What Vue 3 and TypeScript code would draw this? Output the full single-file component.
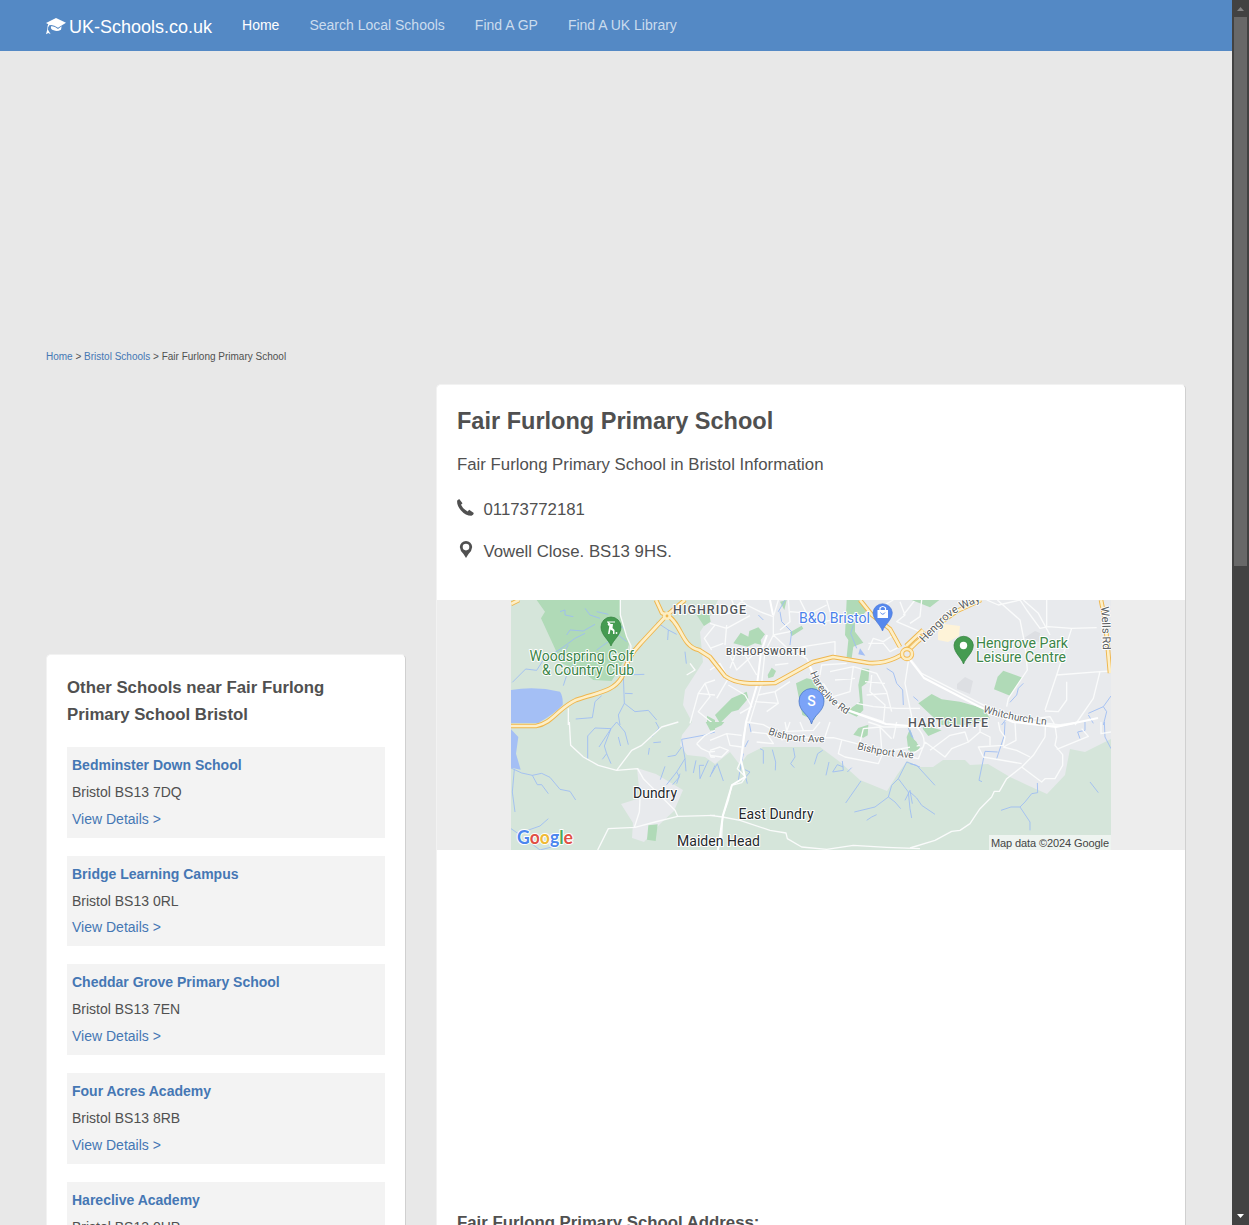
<script setup lang="ts">
interface School { name: string; area: string }
interface Tile { x: number; y: number; parks: string[]; water: string[]; streams: string; roads: string }

const links: string[] = ['Home', 'Search Local Schools', 'Find A GP', 'Find A UK Library']

const schools: School[] = [
  { name: 'Bedminster Down School', area: 'Bristol BS13 7DQ' },
  { name: 'Bridge Learning Campus', area: 'Bristol BS13 0RL' },
  { name: 'Cheddar Grove Primary School', area: 'Bristol BS13 7EN' },
  { name: 'Four Acres Academy', area: 'Bristol BS13 8RB' },
  { name: 'Hareclive Academy', area: 'Bristol BS13 0HP' },
]

// Each map tile is drawn at triple scale with its own origin.
const tiles: Tile[] = [
  {
    x: -6, y: -5,
    parks: ['M95 15 L120 50 L108 70 L145 150 L170 205 L240 235 L265 255 L320 258 L355 200 L372 148 L345 60 L345 15Z', 'M575 60 L597 93 L617 80 L612 55Z', 'M606 362 L630 375 L630 390 L606 390Z'],
    water: ['M18 285 Q90 272 165 290 Q175 305 173 330 Q150 355 100 384 L18 384Z'],
    streams: 'M22 262 L62 222 L95 226 L115 195 L172 158 L210 130 L240 115 M165 195 L190 150 M165 50 L180 45 L180 60 L205 65 M240 40 L255 60 L285 70 M185 120 L195 105 L235 108 L270 88 M275 50 L310 58 M275 165 L310 140 L340 120 L365 140 M175 272 L190 225 L230 185 M355 240 L358 325 L390 350 L430 346 L455 375 M358 240 L418 238 M212 372 L262 368 L270 320 L290 302 M345 390 L340 360 L358 325 M360 295 L383 296 M455 82 L490 105 L515 118 M488 135 L490 105 M540 170 L544 206 M340 85 L360 105',
    roads: 'M346 15 L346 60 L365 125 L378 152 L376 180 M190 340 L190 390 M630 255 L600 265 L580 295 L555 385 M580 295 L630 300 M600 265 L615 305 L580 350 L630 390 M555 205 L570 225 L545 240 M630 90 L598 130 L620 165',
  },
  {
    x: 199, y: -5,
    parks: ['M70 145 L92 113 L115 125 L118 108 L145 97 L165 118 L152 135 L155 150 L135 145 L112 155Z', 'M240 112 L275 92 L280 101 L245 124Z', 'M410 15 L458 15 L472 45 L435 85 L435 110 L460 143 L430 155 L425 190 L410 185 L415 135 L405 120Z', 'M258 265 L290 250 L325 257 L345 310 L312 375 L277 360Z', 'M455 220 L478 222 L475 260 L455 275 L460 345 L440 365 L408 350 L450 320 L445 270Z', 'M15 360 L65 310 L110 290 L115 310 L85 345 L65 350 L30 385Z', 'M173 240 L185 218 L198 228 L190 245 L175 250Z', 'M210 20 L230 15 L223 45Z'],
    water: ['M445 178 L450 160 L466 182Z'],
    streams: 'M430 90 L422 115 L440 160 M240 150 L245 110 L215 80 L210 50 M145 60 L160 75 M530 220 L550 233 L560 265 L578 285 L580 330 M205 50 L225 15',
    roads: 'M92 15 L110 30 L150 50 L190 65 L205 15 M190 65 L190 120 L232 160 L290 190 L300 210 L335 290 L400 340 L520 380 M190 120 L165 170 L155 265 L118 385 M0 85 L50 100 L120 62 M65 15 L80 50 L30 60 M100 15 L60 50 M235 15 L240 80 L210 105 M190 120 L240 110 M240 50 L300 55 L350 30 M270 15 L290 55 L320 85 L385 70 M350 15 L360 50 L405 65 M40 145 L0 160 M60 180 L80 225 L145 165 M75 180 L60 220 M105 180 L140 240 M50 90 L45 150 M0 225 L30 205 L55 250 L20 310 M55 270 L105 300 L125 335 L90 355 M145 300 L195 290 L205 325 L135 320 M205 325 L170 350 M195 290 L240 260 M205 185 L225 170 L280 155 L285 190 M280 155 L375 140 L375 180 M195 210 L235 205 M360 230 L430 215 L500 235 L530 290 L545 350 M430 215 L420 290 L370 305 M375 255 L435 250 M340 265 L370 310 M465 260 L525 265 M470 300 L530 295 M440 325 L490 335 L560 340 M485 240 L480 290 L525 330 L520 385 M330 240 L335 210 L410 205 M475 145 L520 145 L540 170 L570 155 M475 165 L490 130 L520 140 L550 120 M505 40 L550 15 M570 20 L585 60 L560 80 L630 110 M615 15 L580 60 M595 200 L585 265 L610 390 M550 340 L630 340',
  },
  {
    x: 399, y: -5,
    parks: ['M5 15 L88 15 L60 37Z', 'M280 227 L337 248 L300 302 L252 283 L263 245Z', 'M25 325 L65 297 L95 313 L150 320 L220 340 L240 370 L180 390 L95 390Z'],
    water: [],
    streams: 'M340 265 L325 280 L320 300 L300 322 M10 305 L25 318 M603 303 L580 335 L535 355 M580 335 L590 350 L580 390 M305 350 L275 390 M535 360 L550 385',
    roads: 'M0 190 L35 235 L200 320 L300 370 L450 390 M35 15 L30 65 L0 85 M230 15 L265 30 L330 15 L350 45 L390 100 L415 95 L485 100 L560 98 M340 15 L385 55 L420 120 M410 95 L410 15 M262 15 L330 75 L345 150 L352 225 L295 310 L290 335 M485 100 L440 240 L405 345 M440 240 L570 230 L603 228 M570 230 L550 310 L495 390 M470 260 L470 315 L445 350 L405 348 M255 345 L340 375 L420 365 L435 390',
  },
  {
    x: -6, y: 122,
    parks: ['M430 310 L458 307 L452 357 L426 353Z', 'M602 0 L630 0 L630 26 L615 25Z'],
    water: ['M18 22 L40 45 L33 95 L47 143 L18 137Z'],
    streams: 'M18 138 L50 153 L82 160 L110 154 L135 166 L165 202 L195 208 L212 234 M82 160 L97 188 L110 188 L130 215 M28 142 L22 210 L30 270 M18 320 L40 335 L105 312 L130 290 M80 365 L105 384 L140 375 M248 110 L248 42 L270 18 L318 20 L335 0 L360 30 L370 68 M318 20 L298 72 L305 95 L292 112 M318 20 L282 75 M305 95 L318 125 M340 45 L347 72 M440 45 L462 18 L452 0 M430 98 L433 78 M445 62 L468 60 M630 30 L595 40 L530 52 L540 110 L515 150 L485 188 M530 75 L512 100 L488 104 M515 150 L523 165 L503 188 M540 110 L543 148 M573 115 L565 153 M610 115 L585 170 L583 130 L597 130 M480 133 L466 173 M525 155 L515 185 M630 130 L615 165',
    roads: 'M193 0 L197 70 L235 105 L280 130 L335 145 L398 140 L415 170 L455 210 L510 265 L518 283 M518 283 L450 300 L390 316 L310 320 L278 384 M335 145 L380 85 L410 70 L470 15 L520 0 M405 230 L403 270 L388 316 M518 283 L630 280 M575 65 L600 40 L630 25 M575 65 L590 80 L612 90 L630 88 M612 90 L618 105 L630 105',
  },
  {
    x: 199, y: 122,
    parks: ['M0 0 L43 0 L35 10 L0 26Z', 'M430 38 L445 18 L475 8 L473 40 L460 47Z', 'M590 45 L600 20 L610 50 L630 75 L620 90 L595 85Z'],
    water: [],
    streams: 'M118 5 L123 30 M115 55 L105 75 M100 95 L90 145 L85 175 M105 143 L120 150 L107 165 L112 185 M22 125 L5 155 M22 125 L40 177 M150 80 L160 85 L160 125 M187 83 L197 120 L196 145 M250 78 L255 105 L242 125 L253 137 M338 85 L323 95 L313 127 M357 120 L348 160 M397 117 L400 145 L368 150 L382 128 L400 135 M425 137 L412 150 M453 177 L407 243 M590 120 L565 170 L545 190 L535 225 L495 255 L433 270 M535 225 L555 240 L572 260 M565 170 L595 210 L600 260 L605 288 M585 235 L600 205 L607 245 M590 120 L630 135 M470 295 L485 285 L500 278 M592 10 L605 45',
    roads: 'M110 0 L100 45 L95 110 L82 140 L107 165 L95 182 L65 190 L55 235 L38 285 L35 345 L22 384 M110 0 L160 8 L200 30 L300 48 L370 47 L440 65 L520 90 L630 70 M225 0 L230 25 L215 55 M240 0 L230 28 L310 25 L330 0 M270 0 L280 25 M360 0 L345 45 M395 55 L385 95 L405 105 L505 125 L520 90 M450 60 L460 20 L510 15 L545 50 M475 0 L520 15 L630 15 M510 15 L515 80 M560 0 L550 50 M125 30 L170 35 L190 65 L140 60 M0 55 L50 35 L95 40 M0 85 L30 75 L55 85 L35 105 L0 100 M50 35 L60 70 L95 75 M38 285 L0 280 M38 285 L90 295 L180 325 L228 333 L232 350 L275 375 L350 382 L430 370 L530 376 L630 380',
  },
  {
    x: 399, y: 122,
    parks: ['M45 0 L60 15 L95 25 L55 42 L38 20Z', 'M0 42 L20 60 L20 85 L0 90Z'],
    water: [],
    streams: 'M0 125 L20 130 L75 190 M0 210 L20 228 L35 250 L75 277 M285 0 L283 40 L260 110 M263 90 L225 88 L207 175 L216 179 M382 183 L383 212 L365 215 L345 240 L330 255 L303 255 L273 265 M330 255 L360 300 L360 325 M540 180 L565 212 M525 0 L525 25 L503 30 L510 50 M583 0 L585 45 L603 80 M0 25 L10 50',
    roads: 'M20 15 Q50 45 40 75 L0 100 M45 60 L25 110 L0 105 M45 60 L105 105 L125 80 L175 60 M60 85 L120 40 L165 30 L175 60 L210 30 M210 0 L210 30 L240 45 L240 70 M265 0 L270 25 L285 45 L280 70 L205 75 L220 105 L335 125 M315 0 L318 55 L280 75 L320 85 L360 105 M407 0 L405 45 L370 100 L335 135 L290 170 L268 208 L253 208 L245 225 L210 260 L180 305 L150 325 L125 328 L75 355 L0 378 M335 135 L395 180 L405 170 L435 170 L458 130 L458 98 L435 70 L440 45 L435 10 M435 10 L510 0 M440 82 L535 43 L515 20 M573 0 L573 35 L603 30 M350 0 L445 12 L490 5',
  },
]

const mainRoad = 'M0 126 L25 126 C42 123 47 108 65 100 C88 92 102 92 111 77 C116 62 120 53 130 43 L156 15 C171 24 170 46 188 50 L199 57 L214 76 C225 84 237 84 264 83 L302 62 L322 57 L358 63 C376 64 391 58 406 42 L424 27 L446 11 L470 0'
const branches = 'M145 0 L151 13 L156 15 L174 0 M0 4 L8 0 M349 0 L361 15 L379 29 L389 47 M590 0 L594 20 L597 50 L599 73 M395 46 L412 30'
</script>

<template>
  <div class="window">
    <main class="page">
      <nav class="navbar">
        <a class="brand">
          <svg class="cap" viewBox="0 0 60 51">
            <path d="M0 15 L30 0 L60 14 L36 29 Q20 18 10 22 Q5 27 6 35 L14 49 L7 45 L0 49 L4 34 Q3 24 7 19Z" />
            <path d="M15 25 Q25 23 36 33 L47 25 L45 35 Q34 42 23 37 Q13 35 15 25Z" />
          </svg>UK-Schools.co.uk</a>
        <a v-for="(link, i) in links" :key="link" :class="['nav-link', { active: i === 0 }]">{{ link }}</a>
      </nav>
      <div class="container">
        <div class="crumbs"><a>Home</a> &gt; <a>Bristol Schools</a> &gt; Fair Furlong Primary School</div>
        <div class="columns">
          <aside class="card sidebar">
            <h2>Other Schools near Fair Furlong Primary School Bristol</h2>
            <div v-for="school in schools" :key="school.name" class="school">
              <a class="name">{{ school.name }}</a>
              <span>{{ school.area }}</span>
              <a>View Details &gt;</a>
            </div>
          </aside>
          <section class="card details">
            <h1>Fair Furlong Primary School</h1>
            <p class="intro">Fair Furlong Primary School in Bristol Information</p>
            <p class="contact">
              <svg class="icon" viewBox="0 0 17 17"><path d="M.2 1.5 L2.2 0 L5.5 4.2 L4 5.8 Q5.8 9.8 10.6 12.5 L12.2 10.8 L16.8 14 Q16.6 16.2 14.4 16.8 Q8.5 16.8 4 11.5 Q-.5 6 .2 1.5Z" /></svg>
              <span>01173772181</span>
            </p>
            <p class="contact">
              <svg class="icon" viewBox="0 0 17 17"><path fill-rule="evenodd" d="M9 0 A6.2 6.2 0 0 1 15.2 6 Q15 9.5 11.5 13 L9 17 L6.5 13 Q3 9.5 2.8 6 A6.2 6.2 0 0 1 9 0Z M9 2.8 A3.3 3.3 0 1 0 9 9.4 A3.3 3.3 0 1 0 9 2.8Z" /></svg>
              <span>Vowell Close. BS13 9HS.</span>
            </p>
            <div class="map">
              <svg width="600" height="250" viewBox="0 0 600 250">
                <defs>
                  <path id="hareclive" d="M299 73 Q309 101 345 120" />
                  <path id="hengrove" d="M413 43 L438 18 Q450 8 484 -5" />
                  <path id="whitchurch" d="M472 112 Q502 122 545 126" />
                  <path id="bishport-w" d="M257 134 Q281 144 325 142" />
                  <path id="bishport-e" d="M346 149 Q373 157 413 159" />
                  <path id="wells" d="M590 7 Q592 30 592 65" />
                </defs>
                <rect width="600" height="250" fill="#d5e5da" />
                <path fill="#e8eaed" d="M207 0 L200 15 L189 32 L192 62 L174 90 L172 105 L181 122 L171 135 L169 145 L176 155 L194 157 L204 164 L219 152 L229 165 L236 155 L252 147 L309 147 L329 162 L349 180 L376 191 L386 175 L396 161 L409 167 L422 167 L432 160 L454 160 L459 165 L477 164 L499 177 L516 185 L536 194 L554 175 L559 149 L574 152 L600 139 V0Z" />
                <path fill="#e8eaed" d="M126 168 L145 174 L172 190 L163 211 L149 224 L133 242 L121 238 L122 223 L110 204 L129 198Z" />
                <path fill="#fef3d8" d="M427 32 L433 24 L449 26 L448 36 L437 42 L427 40Z" />
                <path fill="#dddfe3" d="M446 84 L454 77 L462 81 L459 94 L446 89Z M513 38 L524 31 L529 33 L528 42Z" />
                <g v-for="(tile, i) in tiles" :key="i" :transform="`translate(${tile.x} ${tile.y}) scale(.33333)`">
                  <path v-for="d in tile.parks" :key="d" :d="d" fill="#b0dab7" />
                  <path v-for="d in tile.water" :key="d" :d="d" fill="#a4bff5" />
                  <path class="stream" :d="tile.streams" />
                  <path class="road" :d="tile.roads" />
                </g>
                <path class="avenue" d="M259 0 L262 15 M256 35 L250 52 L246 85 L235 122 L230 160 L234 177 L221 185 L212 215 L207 250 M298 65 L310 92 L333 109 L375 124 L410 127 M399 60 L413 78 L467 106 L502 122 L545 127 L587 118" />
                <g class="main-road outer"><path :d="mainRoad" /><path :d="branches" /></g>
                <g class="main-road inner"><path :d="mainRoad" /><path :d="branches" /></g>
                <circle cx="396" cy="54" r="5" fill="#e8eaed" stroke="#f3b94e" stroke-width="4.4" />
                <circle cx="396" cy="54" r="5" fill="none" stroke="#fdedc0" stroke-width="2.6" />
                <circle cx="156" cy="16" r="4" fill="#fdedc0" /><circle cx="156" cy="16" r="1.4" fill="#f3b94e" />

                <g class="street">
                  <text><textPath href="#hareclive">Hareclive Rd</textPath></text>
                  <text class="larger"><textPath href="#hengrove">Hengrove Way</textPath></text>
                  <text><textPath href="#whitchurch">Whitchurch Ln</textPath></text>
                  <text><textPath href="#bishport-w">Bishport Ave</textPath></text>
                  <text><textPath href="#bishport-e">Bishport Ave</textPath></text>
                  <text class="larger"><textPath href="#wells">Wells Rd</textPath></text>
                </g>

                <path fill="#459b51" stroke="#2f803b" stroke-width=".7" d="M100 46 C98 40 90 35 90 27 A10 10 0 0 1 110 27 C110 35 102 40 100 46Z" />
                <path fill="none" stroke="#fff" stroke-width="1.2" d="M96 22 H104 M97 22.500 L100 25" /><path fill="#fff" d="M98.500 24 H102 L101.500 28 L103.500 30 V34 H102 V31 L99.500 29.500 L98.500 34 H97 L98 28Z" /><circle cx="98" cy="24.500" r="1.200" fill="#fff" /><circle cx="105.500" cy="33" r=".9" fill="#fff" />
                <path fill="#459b51" stroke="#2f803b" stroke-width=".7" d="M452.500 64 C450 57 443 53 443 45 A9.700 9.700 0 0 1 462.300 45 C462.300 53 455 57 452.500 64Z" />
                <circle cx="452.500" cy="45.500" r="3.700" fill="#fff" />
                <path fill="#5688ed" stroke="#4776d6" stroke-width=".6" d="M371.500 31 C369 24 362 20 362 12.500 A9.700 9.700 0 0 1 381.300 12.500 C381.300 20 374 24 371.500 31Z" />
                <path fill="#fff" d="M366.500 10 H377 V18 H366.500Z" /><path fill="none" stroke="#fff" stroke-width="1.200" d="M369 10 V8 Q371.700 5 374.500 8 V10" /><path fill="none" stroke="#5688ed" stroke-width="1" d="M369.500 12.500 Q371.700 16 374 12.500" />
                <path fill="#7ba3f8" stroke="#4c78c6" stroke-width=".8" d="M300.500 124 C298 114 288 112 288 101 A12.500 12.500 0 0 1 313 101 C313 112 303 114 300.500 124Z" />
                <text class="marker" x="300.500" y="106" text-anchor="middle">S</text>

                <g class="poi green">
                  <text x="18.500" y="61" textLength="104.500" lengthAdjust="spacingAndGlyphs">Woodspring Golf</text><text x="31" y="75" textLength="92" lengthAdjust="spacingAndGlyphs">&amp; Country Club</text>
                  <text x="465" y="48" textLength="92" lengthAdjust="spacingAndGlyphs">Hengrove Park</text><text x="465" y="62" textLength="90" lengthAdjust="spacingAndGlyphs">Leisure Centre</text>
                </g>
                <text class="poi blue" x="288" y="22.500" textLength="71" lengthAdjust="spacingAndGlyphs">B&amp;Q Bristol</text>
                <g class="district"><text x="162" y="14" textLength="73">HIGHRIDGE</text><text x="397" y="127" textLength="80">HARTCLIFFE</text><text class="small" x="215" y="55" textLength="80">BISHOPSWORTH</text></g>
                <g class="town"><text x="122" y="198" textLength="44">Dundry</text><text x="227.500" y="219" textLength="75">East Dundry</text><text x="166" y="245.500" textLength="83">Maiden Head</text></g>
                <text class="google" x="6" y="244" textLength="56" lengthAdjust="spacingAndGlyphs"><tspan fill="#4c86ee">G</tspan><tspan fill="#df5044">o</tspan><tspan fill="#efba36">o</tspan><tspan fill="#4c86ee">g</tspan><tspan fill="#4aaa5c">l</tspan><tspan fill="#df5044">e</tspan></text>
                <rect x="478" y="235" width="122" height="15" fill="#f4f7f5" fill-opacity=".8" />
                <text class="credit" x="480" y="246.500" textLength="118">Map data ©2024 Google</text>
              </svg>
            </div>
            <h3>Fair Furlong Primary School Address:</h3>
          </section>
        </div>
      </div>
    </main>
    <div class="scrollbar">
      <svg width="17" height="17" viewBox="0 0 17 17"><path fill="#858585" d="M5 11 H12 L8.500 7Z" /></svg>
      <div class="thumb"></div>
      <svg class="down" width="17" height="17" viewBox="0 0 17 17"><path fill="#fff" d="M5 6 H12 L8.500 10Z" /></svg>
    </div>
  </div>
</template>

<style>
body { margin: 0; overflow: hidden; }
</style>

<style scoped>
* { box-sizing: border-box; }
.window { display: flex; width: 100%; height: 1225px; overflow: hidden; background: #e8e8e8; font-family: "Liberation Sans", Arial, sans-serif; font-size: 14px; color: #505050; }
.page { flex: 1; min-width: 0; height: 1225px; overflow: hidden; }
a { color: #4577b4; }
.navbar { display: flex; height: 51px; padding-left: 31px; background: #5489c5; }
.navbar a { padding: 15px; line-height: 20px; color: #cbdcee; white-space: nowrap; }
.navbar .active { color: #fff; }
.navbar .brand { display: flex; font-size: 18px; line-height: 24px; color: #fff; }
.cap { width: 20px; height: 17px; margin: 3px 3px 0 0; fill: #fff; flex: none; }
.container { width: 1170px; margin: 0 auto; padding: 0 15px; }
.crumbs { padding-top: 296px; height: 333px; font-size: 10px; line-height: 20px; }
.columns { display: flex; gap: 30px; align-items: flex-start; }
.card { background: #fff; border: 1px solid #f2f2f2; border-right-color: #d0d0d0; border-radius: 5px; }
.sidebar { width: 360px; height: 700px; margin-top: 270px; padding: 19px 20px; flex: none; }
.details { width: 750px; height: 1000px; flex: none; }
h2 { margin: 0 0 19px; font-size: 16.800px; line-height: 27px; }
.school { display: flex; flex-direction: column; height: 90.640px; margin-bottom: 18.060px; padding: 5px; background: #f3f3f3; line-height: 26.880px; }
.name { font-weight: bold; }
h1 { margin: 20px 20px 0; font-size: 23.520px; line-height: 32px; }
.intro { margin: 14px 20px 0; font-size: 16.800px; line-height: 27px; }
.contact { display: flex; gap: 9.500px; margin: 18px 20px 0; height: 27px; font-size: 16.800px; line-height: 27px; }
.contact + .contact { margin-top: 15px; }
.icon { width: 17px; height: 17px; margin-top: 3px; fill: #505050; }
.map { display: flex; justify-content: center; margin-top: 35px; height: 250px; background: #ededed; }
h3 { margin: 359px 20px 0; font-size: 16.800px; line-height: 27px; }
.map text { font-family: Roboto, sans-serif; paint-order: stroke; stroke-linejoin: round; }
.stream { fill: none; stroke: #9dbcf3; stroke-width: 2.600; }
.road { fill: none; stroke: #fafbfb; stroke-width: 4; stroke-linejoin: round; }
.avenue { fill: none; stroke: #fff; stroke-width: 2; stroke-linejoin: round; }
.main-road { fill: none; stroke-linejoin: round; }
.outer { stroke: #efb64d; stroke-width: 4.600; }
.inner { stroke: #fdefc7; stroke-width: 2.700; }
.poi { font-size: 14px; stroke: #fff; stroke-width: 2px; }
.green { fill: #3c8548; }
.blue { fill: #4b7fea; }
.district { font-size: 12.500px; font-weight: 500; fill: #53575b; stroke: #fff; stroke-width: 2px; }
.district .small { font-size: 9.800px; }
.town { font-size: 14px; fill: #25282c; stroke: #fff; stroke-width: 2px; }
.street { font-size: 10.200px; fill: #5a5e62; stroke: #fff; stroke-width: 1.800px; }
.street .larger { font-size: 11.200px; }
.marker { font-size: 14px; font-weight: 500; fill: #fff; }
.google { font-size: 18px; stroke: #fff; stroke-width: 2px; }
.map .google { font-family: Lato, sans-serif; font-weight: 700; }
.map .credit { font-family: "Liberation Sans", Arial, sans-serif; font-size: 11px; fill: #444; }
.scrollbar { display: flex; flex-direction: column; align-items: center; width: 17px; height: 1225px; background: #424242; }
.scrollbar svg { flex: none; }
.thumb { width: 13px; height: 549px; background: #686868; }
.down { margin-top: auto; }
</style>
